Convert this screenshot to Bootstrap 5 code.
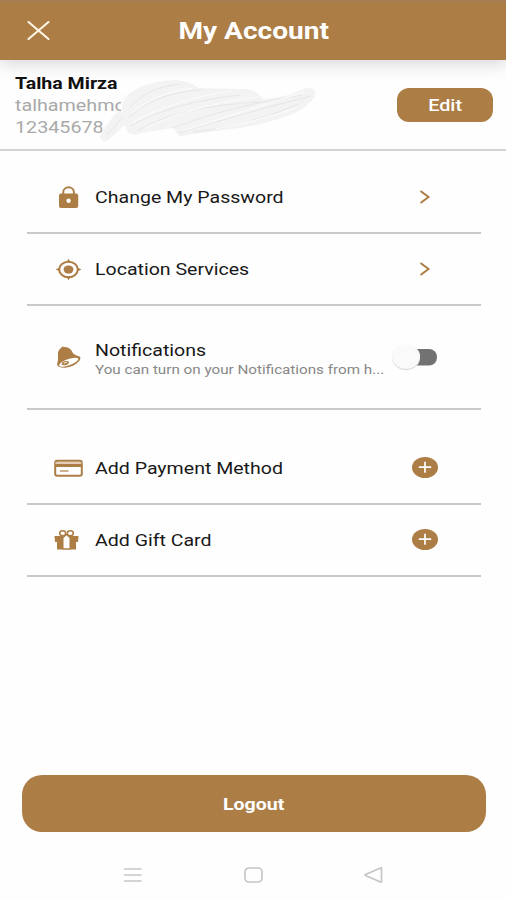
<!DOCTYPE html>
<html lang="en">
<head>
<meta charset="utf-8">
<meta name="viewport" content="width=device-width, initial-scale=1">
<title>My Account</title>
<link href="https://cdn.jsdelivr.net/npm/bootstrap@5.3.0/dist/css/bootstrap.min.css" rel="stylesheet">
<style>
:root { --brand: #ac7d45; }
body { font-family: Roboto, "Liberation Sans", sans-serif; color: #181818; background: #fefefe; }
.screen { height: 900px; overflow: hidden; }
.topbar { height: 60px; background: linear-gradient(#a37d57 0, var(--brand) 4px); box-shadow: 0 4px 16px rgba(0,0,0,.16); z-index: 2; padding: 4px 0 0 2px; }
.close-btn { left: 27px; top: 20px; line-height: 0; }
/* wide lettering */
.wide { display: inline-block; white-space: nowrap; transform: scaleX(var(--sx, 1.15)); transform-origin: left center; }
.wide-center { transform-origin: center; }
.title { font-size: 23px; font-weight: 700; line-height: 28px; --sx: 1.22; }
.profile { height: 91px; border-bottom: 2px solid #d3d3d3; padding: 12px 13px 0 15px; }
.profile-text { font-size: 17px; line-height: 22px; color: #a9a9a9; --sx: 1.16; }
.profile-name { font-weight: 700; color: #111; --sx: 1.15; }
.scribble { left: 95px; top: 15px; }
.btn-brand, .btn-brand:hover { background: var(--brand); color: #fff; border: 0; }
.btn-edit { width: 96px; height: 34px; border-radius: 12px; font-size: 16.5px; font-weight: 500; margin-top: 16px; padding: 2px 0 0; --sx: 1.2; }
.rows { margin: 11px 25px 0 27px; }
.item { height: 72px; border-bottom: 2px solid #c9c9c9; padding-right: 42px; }
.item-tall { height: 104px; margin-bottom: 23px; }
.item-icon { width: 68px; padding-left: 26px; line-height: 0; }
.item-label { font-size: 17px; line-height: 22px; }
.item-sub { font-size: 13px; line-height: 18px; color: #888; --sx: 1.17; }
.item-end { width: 28px; line-height: 0; text-align: center; }
.track { width: 47px; height: 28px; }
.btn-logout { height: 57px; border-radius: 20px; font-size: 17px; font-weight: 700; margin: 0 20px 0 22px; padding: 3px 0 0; }
.sysbar { height: 68.5px; padding: 18px 0 0 0; }
</style>
</head>
<body>
<div class="screen d-flex flex-column">
  <header class="topbar position-relative d-flex align-items-center justify-content-center text-white flex-shrink-0">
    <a href="#" class="close-btn position-absolute" aria-label="Close">
      <svg width="23" height="20" viewBox="0 0 23 20" fill="none" stroke="#fff6e6" stroke-width="2.1" stroke-linecap="round"><path d="M1.500 2l20 17M21.500 2l-20 17"/></svg>
    </a>
    <span class="wide wide-center title">My Account</span>
  </header>

  <section class="profile position-relative d-flex justify-content-between align-items-start flex-shrink-0">
    <div class="profile-text">
      <div><span class="wide profile-name">Talha Mirza</span></div>
      <div><span class="wide">talhamehmo</span></div>
      <div><span class="wide">12345678</span></div>
    </div>
    <svg class="scribble position-absolute" width="225" height="70" viewBox="0 0 225 70">
      <path d="M9 66Q3 65 7 57L17 43Q21 37 27 36Q26 26 35 18Q52 6 80 5Q95 6 103 13L150 14Q161 14 168 24Q190 23 206 15Q214 11 219 15Q223 21 214 28Q205 38 180 45Q158 52 129 55L92 60Q85 64 82 58L78 53L46 58Q36 62 32 56L30 50L15 63Q12 67 9 66Z" fill="#f3f3f3"/>
      <path d="M26 20H36V38H26ZM8 50L20 50 12 62 7 58Z" fill="#fbfbfb"/>
      <path d="M9 66Q3 65 7 57L17 43Q21 37 27 36Q26 26 35 18L50 40 30 50 15 63Q12 67 9 66Z" fill="#f3f3f3"/>
      <g fill="none" stroke="#e6e6e6" stroke-width="1">
        <path d="M34 33Q50 13 84 9M34 42Q62 17 106 15M36 51Q75 28 145 20M44 55Q84 31 165 27M78 53Q130 32 207 20M84 58Q142 40 216 21M98 57Q150 52 204 29M12 60L28 42"/>
      </g>
      <g fill="none" stroke="#fbfbfb" stroke-width="1.2">
        <path d="M37 38Q60 18 98 13M38 47Q80 24 136 16M50 53Q98 30 163 22M88 56Q144 38 209 17M120 54Q165 46 200 33"/>
      </g>
    </svg>
    <button type="button" class="btn btn-brand btn-edit"><span class="wide wide-center">Edit</span></button>
  </section>

  <main class="rows flex-shrink-0">
    <div class="item d-flex align-items-center">
      <div class="item-icon">
        <svg width="32" height="24" viewBox="0 0 32 24"><path d="M10.300 10V7a5.300 4.800 0 0 1 10.600 0V10" fill="none" stroke="#ac7d45" stroke-width="1.900"/><rect x="6" y="8.500" width="19.200" height="14.500" rx="2" fill="#ac7d45"/><circle cx="15.600" cy="15.800" r="2.200" fill="#fff"/></svg>
      </div>
      <div class="item-label flex-grow-1"><span class="wide">Change My Password</span></div>
      <div class="item-end"><svg width="12" height="14" viewBox="0 0 12 14" fill="none" stroke="#ac7d45" stroke-width="2"><path d="M1.500 1l8 6-8 6"/></svg></div>
    </div>
    <div class="item d-flex align-items-center">
      <div class="item-icon">
        <svg width="32" height="24" viewBox="0 0 32 24"><ellipse cx="15.500" cy="12.500" rx="9.300" ry="7.800" fill="none" stroke="#ac7d45" stroke-width="2"/><path d="M15.500 1.800l2 3.500h-4ZM15.500 23.200l2-3.500h-4ZM2.500 12.500l4-1.700v3.400ZM28.500 12.500l-4-1.700v3.400Z" fill="#ac7d45"/><ellipse cx="15.500" cy="12.500" rx="4.900" ry="4.100" fill="#ac7d45"/></svg>
      </div>
      <div class="item-label flex-grow-1"><span class="wide">Location Services</span></div>
      <div class="item-end"><svg width="12" height="14" viewBox="0 0 12 14" fill="none" stroke="#ac7d45" stroke-width="2"><path d="M1.500 1l8 6-8 6"/></svg></div>
    </div>
    <div class="item item-tall d-flex align-items-center">
      <div class="item-icon">
        <svg width="32" height="24" viewBox="0 0 32 24"><path d="M8.500 2.500Q9.500 1 11 2Q16 1.800 18.500 5.500Q20 10 26.500 11.500Q28.500 13 26 16.200Q21 21.800 12 22.800Q5 23 4 19.500Q5.500 15 5 10Q4.500 5 8.500 2.500Z" fill="#ac7d45"/><ellipse cx="15.700" cy="17.200" rx="10.200" ry="3.100" transform="rotate(-20 15.700 17.200)" fill="#fff"/><path d="M8.500 19.500Q8.500 16.500 12.500 16Q16.500 15.500 16 17.500Q15 20.500 10.500 20.300Z" fill="#ac7d45"/><path d="M10.800 18.600Q12 17.200 13.800 17.300" stroke="#fff" stroke-width="1" fill="none"/></svg>
      </div>
      <div class="flex-grow-1 pt-1">
        <div class="item-label"><span class="wide">Notifications</span></div>
        <div class="item-sub"><span class="wide">You can turn on your Notifications from h...</span></div>
      </div>
      <div class="lh-1">
        <svg class="track d-block" viewBox="0 0 47 28" role="switch" aria-checked="false"><rect x="11" y="6" width="34" height="16.500" rx="8" fill="#727272"/><ellipse cx="14" cy="14.700" rx="14" ry="12.500" fill="#dedede"/><ellipse cx="14" cy="13.500" rx="14" ry="12.300" fill="#fafafa"/></svg>
      </div>
    </div>
    <div class="item d-flex align-items-center">
      <div class="item-icon">
        <svg width="32" height="24" viewBox="0 0 32 24"><rect x="2.200" y="4.800" width="26.600" height="15" rx="2" fill="none" stroke="#ac7d45" stroke-width="2"/><path d="M2.200 7h26.600" stroke="#d9bf9c" stroke-width="1.500"/><path d="M2.200 9.500h26.600" stroke="#ac7d45" stroke-width="3"/><path d="M7 15h8.500" stroke="#ac7d45" stroke-width="1.200"/></svg>
      </div>
      <div class="item-label flex-grow-1"><span class="wide">Add Payment Method</span></div>
      <div class="item-end"><svg width="26" height="22" viewBox="0 0 26 22"><ellipse cx="13" cy="10.500" rx="13" ry="10.500" fill="#ac7d45"/><path d="M6.800 10.200h12.400M13 4.700v11" stroke="#fff" stroke-width="1.700"/></svg></div>
    </div>
    <div class="item d-flex align-items-center">
      <div class="item-icon">
        <svg width="32" height="24" viewBox="0 0 32 24"><g fill="none" stroke="#ac7d45" stroke-width="1.500"><ellipse cx="9.700" cy="5.200" rx="3" ry="2.500"/><ellipse cx="17.300" cy="5.200" rx="3" ry="2.500"/></g><path d="M1.500 8h9v13.500H4V14H2ZM25.500 8h-9v13.500H23V14h2Z" fill="#ac7d45"/><path d="M9.500 21h8M10 9.500L13.500 6.500 17 9.500" fill="none" stroke="#ac7d45" stroke-width="1.300"/></svg>
      </div>
      <div class="item-label flex-grow-1"><span class="wide">Add Gift Card</span></div>
      <div class="item-end"><svg width="26" height="22" viewBox="0 0 26 22"><ellipse cx="13" cy="10.500" rx="13" ry="10.500" fill="#ac7d45"/><path d="M6.800 10.200h12.400M13 4.700v11" stroke="#fff" stroke-width="1.700"/></svg></div>
    </div>
  </main>

  <button type="button" class="btn btn-brand btn-logout mt-auto flex-shrink-0"><span class="wide wide-center">Logout</span></button>

  <nav class="sysbar d-flex flex-shrink-0 justify-content-center align-items-center">
    <svg width="260" height="20" viewBox="0 0 260 20" fill="none" stroke="#c6c6c6" stroke-width="1.700"><path d="M1 4h17.500M1 10h17.500M1 16h17.500"/><rect x="122" y="3" width="17" height="14" rx="4"/><path d="M258.500 3.500v13q0 1-1 .5L242.500 10.500q-1-.5 0-1L257.500 3q1-.5 1 .5Z"/></svg>
  </nav>
</div>
<script src="https://cdn.jsdelivr.net/npm/bootstrap@5.3.0/dist/js/bootstrap.bundle.min.js"></script>
</body>
</html>
